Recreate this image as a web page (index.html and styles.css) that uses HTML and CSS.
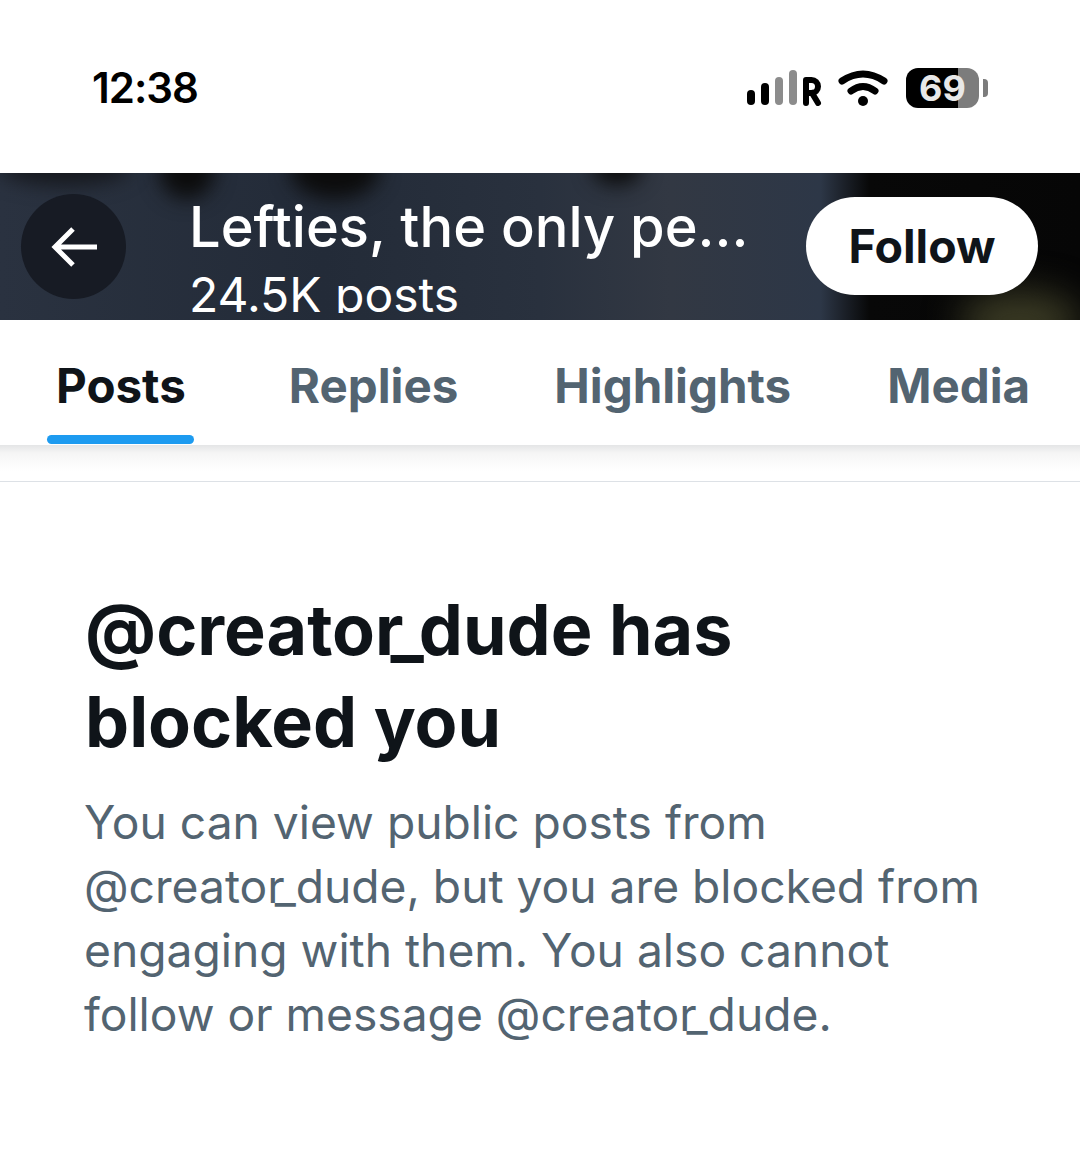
FILE: index.html
```html
<!DOCTYPE html>
<html lang="en">
<head>
<meta charset="utf-8">
<title>Profile</title>
<link rel="stylesheet" href="styles.css">
</head>
<body>
<div class="status">
  <span class="time">12:38</span>
  <div class="status-icons">
    <svg class="signal" width="75" height="36" viewBox="0 0 75 36">
      <rect x="0" y="20" width="8" height="15" rx="4" fill="#000"/>
      <rect x="14" y="13" width="8" height="22" rx="4" fill="#000"/>
      <rect x="28" y="7" width="8" height="28" rx="4" fill="#8c8c8c"/>
      <rect x="42" y="0" width="8" height="35" rx="4" fill="#8c8c8c"/>
      <path d="M59 33V10h5.500a6 6 0 0 1 0 13H59M65 23L71 33" fill="none" stroke="#000" stroke-width="6" stroke-linecap="round" stroke-linejoin="round"/>
    </svg>
    <svg class="wifi" width="50" height="36" viewBox="0 0 50 36">
      <path d="M4 11Q25 -3 46 11" fill="none" stroke="#000" stroke-width="7" stroke-linecap="round"/>
      <path d="M13 21Q25 12 37 21" fill="none" stroke="#000" stroke-width="7" stroke-linecap="round"/>
      <circle cx="25" cy="31" r="5" fill="#000"/>
    </svg>
    <div class="battery">
      <div class="battery-body"><span class="battery-text">69</span></div>
      <span class="battery-cap"></span>
    </div>
  </div>
</div>

<header class="banner">
  <span class="blob blob-a"></span>
  <span class="blob blob-b"></span>
  <span class="blob blob-c"></span>
  <span class="blob blob-d"></span>
  <span class="blob blob-e"></span>
  <button class="back" aria-label="Back">
    <svg width="48" height="42" viewBox="0 0 48 42">
      <path d="M46 21H5M22 3L4 21L22 39" fill="none" stroke="#fff" stroke-width="5"/>
    </svg>
  </button>
  <div class="titles">
    <div class="title">Lefties, the only pe...</div>
    <div class="count">24.5K posts</div>
  </div>
  <button class="follow">Follow</button>
</header>

<nav class="tabs">
  <a class="tab tab-active">Posts<span class="underline"></span></a>
  <a class="tab">Replies</a>
  <a class="tab">Highlights</a>
  <a class="tab">Media</a>
</nav>

<div class="spacer"></div>

<main class="message">
  <h1>@creato<span class="tuck-big">r</span><span class="us-big">_</span>dude has<br>blocked you</h1>
  <p>You can view public posts from<br>@creato<span class="tuck">r</span>_dude, but you are blocked from<br>engaging with them. You also cannot<br>follow or message @creato<span class="tuck">r</span>_dude.</p>
</main>
</body>
</html>
```

FILE: styles.css
```css
* { box-sizing: border-box; }
html, body { margin: 0; padding: 0; background: #fff; }
body { width: 1080px; height: 1153px; overflow: hidden; font-family: Inter, "Liberation Sans", sans-serif; }

.status { height: 173px; display: flex; justify-content: space-between; align-items: flex-start; padding: 63px 92px 0 92px; }
.time { font-size: 42px; line-height: 50px; font-weight: 600; color: #000; letter-spacing: -1px; }
.status-icons { display: flex; align-items: center; gap: 16px; padding-top: 5px; }
.signal { display: block; }
.wifi { display: block; }
.battery { display: flex; align-items: center; gap: 4px; margin-left: 2px; }
.battery-body { width: 73px; height: 40px; border-radius: 12px; background: linear-gradient(90deg, #000 52px, #7c7c7c 52px); display: flex; align-items: center; justify-content: center; }
.battery-text { font-size: 36px; line-height: 40px; font-weight: 700; color: #e8e8e8; }
.battery-cap { width: 5px; height: 18px; border-radius: 0 4px 4px 0; background: #7c7c7c; }

.banner { position: relative; height: 147px; display: flex; align-items: flex-start; overflow: hidden; padding: 21px 42px 0 21px;
  background: linear-gradient(90deg, #2a3240 0%, #232b38 30%, #29313e 50%, #323843 62%, #2d3747 76%, #080808 80.500%, #060606 100%); }
.blob { position: absolute; border-radius: 50%; filter: blur(10px); background: #0c0c0c; }
.blob-a { left: 159px; top: -32px; width: 56px; height: 58px; }
.blob-b { left: 290px; top: -32px; width: 90px; height: 58px; }
.blob-c { left: 592px; top: -24px; width: 50px; height: 36px; }
.blob-d { left: 960px; top: 118px; width: 120px; height: 60px; background: #3a3a24; filter: blur(18px); }
.blob-e { left: 0; top: -24px; width: 130px; height: 36px; background: #16181d; }

.back { position: relative; flex: none; width: 105px; height: 105px; border: 0; border-radius: 50%; background: #171b24; padding: 0 0 0 3px; display: flex; align-items: center; justify-content: center; }
.titles { position: relative; flex: 1; height: 119px; margin-left: 63px; overflow: hidden; color: #fff; }
.title { font-size: 56px; line-height: 68px; font-weight: 500; margin-top: -1px; white-space: nowrap; }
.count { font-size: 48px; line-height: 58px; font-weight: 400; margin-top: 5px; white-space: nowrap; }
.follow { position: relative; flex: none; width: 232px; height: 98px; margin-top: 3px; border: 0; border-radius: 49px; background: #fff; color: #0f1419; font: 700 46.500px Inter, "Liberation Sans", sans-serif; }

.tabs { position: relative; height: 125px; display: flex; padding-left: 56px; background: #fff; }
.tab { position: relative; font-size: 47.500px; line-height: 132px; font-weight: 700; color: #536471; white-space: nowrap; }
.tab:nth-child(2) { margin-left: 103px; }
.tab:nth-child(3) { margin-left: 96px; }
.tab:nth-child(4) { margin-left: 96px; }
.tab-active { color: #0f1419; }
.underline { position: absolute; left: -9px; right: -8px; bottom: 1px; height: 9px; border-radius: 5px; background: #1d9bf0; }

.spacer { height: 37px; border-bottom: 1px solid #dde1e6; background: linear-gradient(#e4e5e6 0, #f5f5f5 8px, #fff 26px); }

.message { padding: 102px 60px 0 84px; }
.message h1 { margin: 0 0 0 1px; font-size: 70px; line-height: 92px; font-weight: 700; color: #0f1419; }
.message p { margin: 22px 0 0; font-size: 46.200px; line-height: 64px; font-weight: 400; color: #536471; }
.tuck-big { letter-spacing: -13px; }
.us-big { letter-spacing: -5px; }
.tuck { letter-spacing: -10px; }
```
